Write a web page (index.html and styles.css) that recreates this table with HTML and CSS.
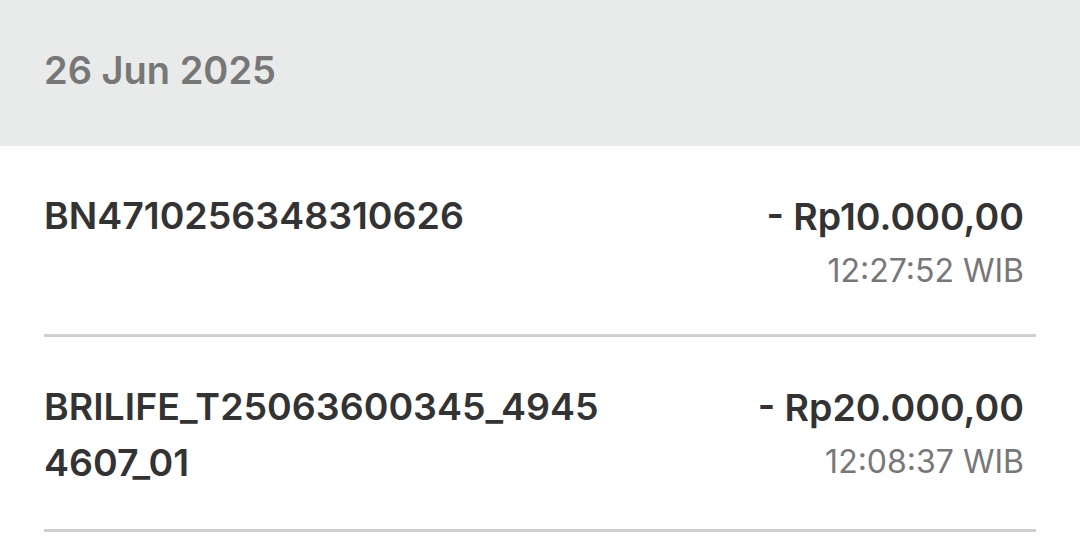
FILE: index.html
```html
<!DOCTYPE html>
<html lang="id">

<head>
    <meta charset="UTF-8">
    <meta name="viewport" content="width=device-width, initial-scale=1.0">
    <title>Mutasi Rekening</title>
    <link rel="stylesheet" href="styles.css">
</head>

<body>

    <!-- Date header -->
    <div class="date-head">26 Jun 2025</div>

    <!-- Transaction list -->
    <ul class="trx-list">
        <li class="trx">
            <div class="trx-name">BN4710256348310626</div>
            <div class="trx-side">
                <div class="trx-amount">- Rp10.000,00</div>
                <div class="trx-time">12:27:52 WIB</div>
            </div>
        </li>
        <li class="trx">
            <div class="trx-name">BRILIFE_T25063600345_49454607_01</div>
            <div class="trx-side">
                <div class="trx-amount">- Rp20.000,00</div>
                <div class="trx-time">12:08:37 WIB</div>
            </div>
        </li>
    </ul>

</body>

</html>
```

FILE: styles.css
```css
/* Reset */
* {
    margin: 0;
    padding: 0;
    box-sizing: border-box;
}

:root {
    --text-dark: #333333;
    --text-grey: #777777;
    --head-bg: #e9eaea;
    --line: #cfcfcf;
}

body {
    font-family: Inter, "Noto Sans", sans-serif;
    background: #ffffff;
    color: var(--text-dark);
}

.date-head {
    height: 146px;
    background: var(--head-bg);
    padding: 46px 44px 0;
    font-size: 38px;
    font-weight: 600;
    line-height: 48px;
    color: var(--text-grey);
}

.trx-list {
    list-style: none;
}

.trx {
    display: flex;
    justify-content: space-between;
    gap: 40px;
    margin: 0 44px;
    padding: 42px 12px 38px 0;
    border-bottom: 3px solid var(--line);
}

.trx-name {
    flex: 1;
    max-width: 567px;
    font-size: 37.5px;
    font-weight: 600;
    line-height: 56px;
    word-break: break-all;
}

.trx-side {
    text-align: right;
    white-space: nowrap;
}

.trx-amount {
    font-size: 37.5px;
    font-weight: 600;
    line-height: 57px;
}

.trx-time {
    font-size: 32px;
    line-height: 51px;
    color: var(--text-grey);
}
```
